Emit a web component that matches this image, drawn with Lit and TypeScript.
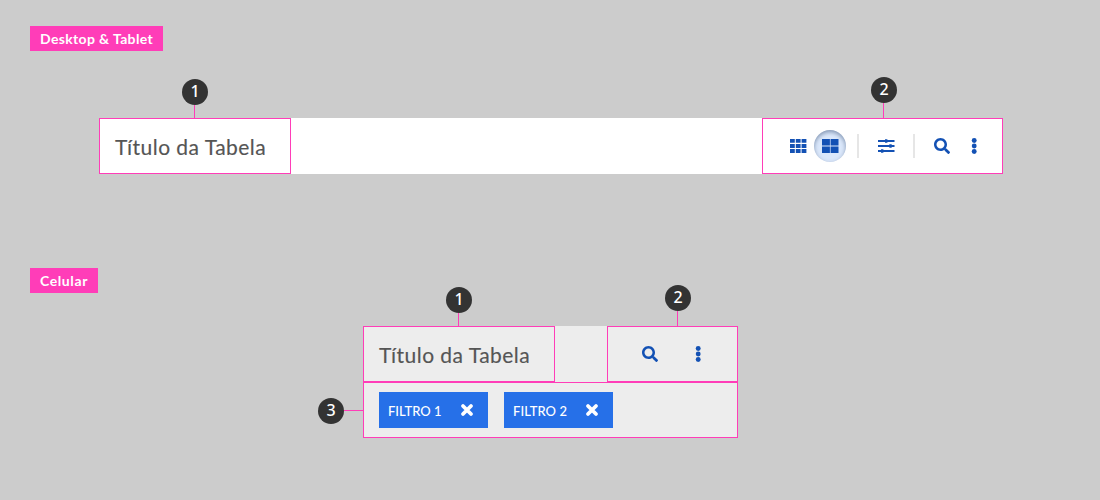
import { LitElement, html, css, svg } from "lit";
import { customElement, property } from "lit/decorators.js";

const shapes: Record<string, unknown> = {
  grid: svg`<path d="M0 1h4.8v3.8H0zM5.8 1h4.8v3.8H5.8zM11.6 1h4.8v3.8h-4.8zM0 6.1h4.8v3.8H0zM5.8 6.1h4.8v3.8H5.8zM11.6 6.1h4.8v3.8h-4.8zM0 11.1h4.8v3.8H0zM5.8 11.1h4.8v3.8H5.8zM11.6 11.1h4.8v3.8h-4.8z"/>`,
  large: svg`<path d="M0 1h7.9v6.4H0zM8.6 1h7.9v6.4H8.6zM0 8.500h7.9v6.4H0zM8.6 8.500h7.9v6.4H8.6z"/>`,
  sliders: svg`<path d="M0 2h16.500v2H0zM0 7h16.500v2H0zM0 12h16.500v2H0zM7 1.200h2.400v3.600H7zM11.300 6.200h2.400v3.600h-2.400zM3 11.200h2.400v3.600H3z"/>`,
  search: svg`<g transform="scale(.03125)"><path d="M505 442.700L405.300 343c-4.500-4.500-10.600-7-17-7H372c27.600-35.300 44-79.700 44-128C416 93.100 322.900 0 208 0S0 93.100 0 208s93.100 208 208 208c48.300 0 92.700-16.400 128-44v16.300c0 6.400 2.500 12.500 7 17l99.700 99.700c9.400 9.400 24.600 9.400 33.900 0l28.300-28.300c9.400-9.400 9.400-24.600.1-34zM208 336c-70.700 0-128-57.200-128-128 0-70.700 57.200-128 128-128 70.700 0 128 57.200 128 128 0 70.700-57.200 128-128 128z"/></g>`,
  more: svg`<circle cx="8.2" cy="2.500" r="2.450"/><circle cx="8.2" cy="8" r="2.450"/><circle cx="8.2" cy="13.500" r="2.450"/>`,
  close: svg`<path d="M4 4L12 12M12 4L4 12" stroke="currentColor" stroke-width="3.800" stroke-linecap="round"/>`,
};

@customElement("ui-icon")
export class UiIcon extends LitElement {
  static styles = css`
    :host { display: block; width: 17px; height: 16px; flex: none; }
    .glyph { display: block; fill: currentColor; }
  `;
  @property() name = "search";
  render() {
    return html`<svg class="glyph" width="17" height="16" viewBox="0 0 17 16">${shapes[this.name]}</svg>`;
  }
}

@customElement("callout-marker")
export class CalloutMarker extends LitElement {
  static styles = css`
    :host { display: flex; flex-direction: column; align-items: center; width: 26px; }
    :host([side]) { flex-direction: row; width: auto; }
    .disc {
      width: 26px; height: 26px; border-radius: 50%; background: #333; color: #fff;
      font: 500 16px/25px "Noto Sans", sans-serif; text-align: center; flex: none;
      letter-spacing: 0; -webkit-text-stroke: 0;
    }
    .stem { width: 1px; height: var(--stem, 13px); background: #ff3db8; margin-right: 1px; }
    :host([side]) .stem { width: 19px; height: 1px; margin: 0 0 1px; }
  `;
  @property() label = "";
  render() {
    return html`<div class="disc">${this.label}</div><div class="stem"></div>`;
  }
}

@customElement("filter-chip")
export class FilterChip extends LitElement {
  static styles = css`
    :host {
      display: flex; box-sizing: border-box; width: 109px; height: 36px; padding: 0 12px 0 9px;
      align-items: center; justify-content: space-between; background: #2670e8; color: #fff;
      font: 500 13px/18px Lato, sans-serif;
    }
    .label { padding-top: 2px; white-space: nowrap; letter-spacing: var(--track, 0); }
  `;
  @property() label = "";
  render() {
    return html`<span class="label">${this.label}</span><ui-icon name="close"></ui-icon>`;
  }
}

@customElement("app-root")
export class AppRoot extends LitElement {
  static styles = css`
    :host {
      display: block; box-sizing: border-box; width: 1100px; height: 500px; padding-top: 26px;
      background: #ccc; overflow: hidden; font-family: Lato, sans-serif;
    }
    .tag {
      box-sizing: border-box; height: 25px; width: 133px; margin-left: 30px; padding-left: 10px;
      background: #ff3db8; color: #fff; font-size: 14px; line-height: 25px; font-weight: 700;
      letter-spacing: 0.36px; white-space: nowrap;
    }
    .tag.small { width: 68px; letter-spacing: 0.6px; }
    .desktop { display: flex; justify-content: space-between; width: 904px; height: 56px; margin: 67px 0 94px 99px; background: #fff; }
    .mobile { width: 375px; margin: 33px 0 0 363px; background: #ededed; }
    .head { display: flex; justify-content: space-between; height: 56px; }
    .zone { position: relative; box-sizing: border-box; height: 56px; border: 1px solid #ff3db8; display: flex; align-items: center; }
    .title {
      width: 192px; padding: 2px 0 0 15px; color: #555; font-size: 21px; line-height: 28px;
      letter-spacing: 0.46px; white-space: nowrap; -webkit-text-stroke: 0.15px #555;
    }
    .actions { width: 241px; color: #1351b4; padding-left: 27px; }
    .pressed {
      display: flex; align-items: center; justify-content: center; width: 32px; height: 32px;
      margin: 0 11px 0 7px; border-radius: 50%; background: #dbe8fb;
      box-shadow: inset 0 2px 4px rgba(40, 65, 105, 0.5);
    }
    .rule { width: 2px; height: 24px; background: #e6e6e6; }
    .tune { margin: 0 18px 0 19px; }
    .find { margin: 0 15px 0 19px; }
    .compact { width: 131px; padding-left: 34px; gap: 31px; color: #1351b4; }
    .filters { padding-left: 15px; gap: 16px; }
    .filters filter-chip + filter-chip { --track: 0.05px; }
    .pin { position: absolute; bottom: 55px; }
    .pin-title { left: 82px; }
    .pin-actions { left: 108px; --stem: 15px; }
    .pin-compact { left: 57px; --stem: 15px; }
    .pin-filter { left: -46px; top: 15px; bottom: auto; }
  `;
  render() {
    return html`
      <div class="tag">Desktop &amp; Tablet</div>
      <section class="desktop">
        <div class="zone title">
          Título da Tabela
          <callout-marker class="pin pin-title" label="1"></callout-marker>
        </div>
        <div class="zone actions">
          <ui-icon name="grid"></ui-icon>
          <span class="pressed"><ui-icon name="large"></ui-icon></span>
          <span class="rule"></span>
          <ui-icon class="tune" name="sliders"></ui-icon>
          <span class="rule"></span>
          <ui-icon class="find" name="search"></ui-icon>
          <ui-icon name="more"></ui-icon>
          <callout-marker class="pin pin-actions" label="2"></callout-marker>
        </div>
      </section>
      <div class="tag small">Celular</div>
      <section class="mobile">
        <div class="head">
          <div class="zone title">
            Título da Tabela
            <callout-marker class="pin pin-title" label="1"></callout-marker>
          </div>
          <div class="zone compact">
            <ui-icon name="search"></ui-icon>
            <ui-icon name="more"></ui-icon>
            <callout-marker class="pin pin-compact" label="2"></callout-marker>
          </div>
        </div>
        <div class="zone filters">
          <filter-chip label="FILTRO 1"></filter-chip>
          <filter-chip label="FILTRO 2"></filter-chip>
          <callout-marker class="pin pin-filter" side label="3"></callout-marker>
        </div>
      </section>
    `;
  }
}
